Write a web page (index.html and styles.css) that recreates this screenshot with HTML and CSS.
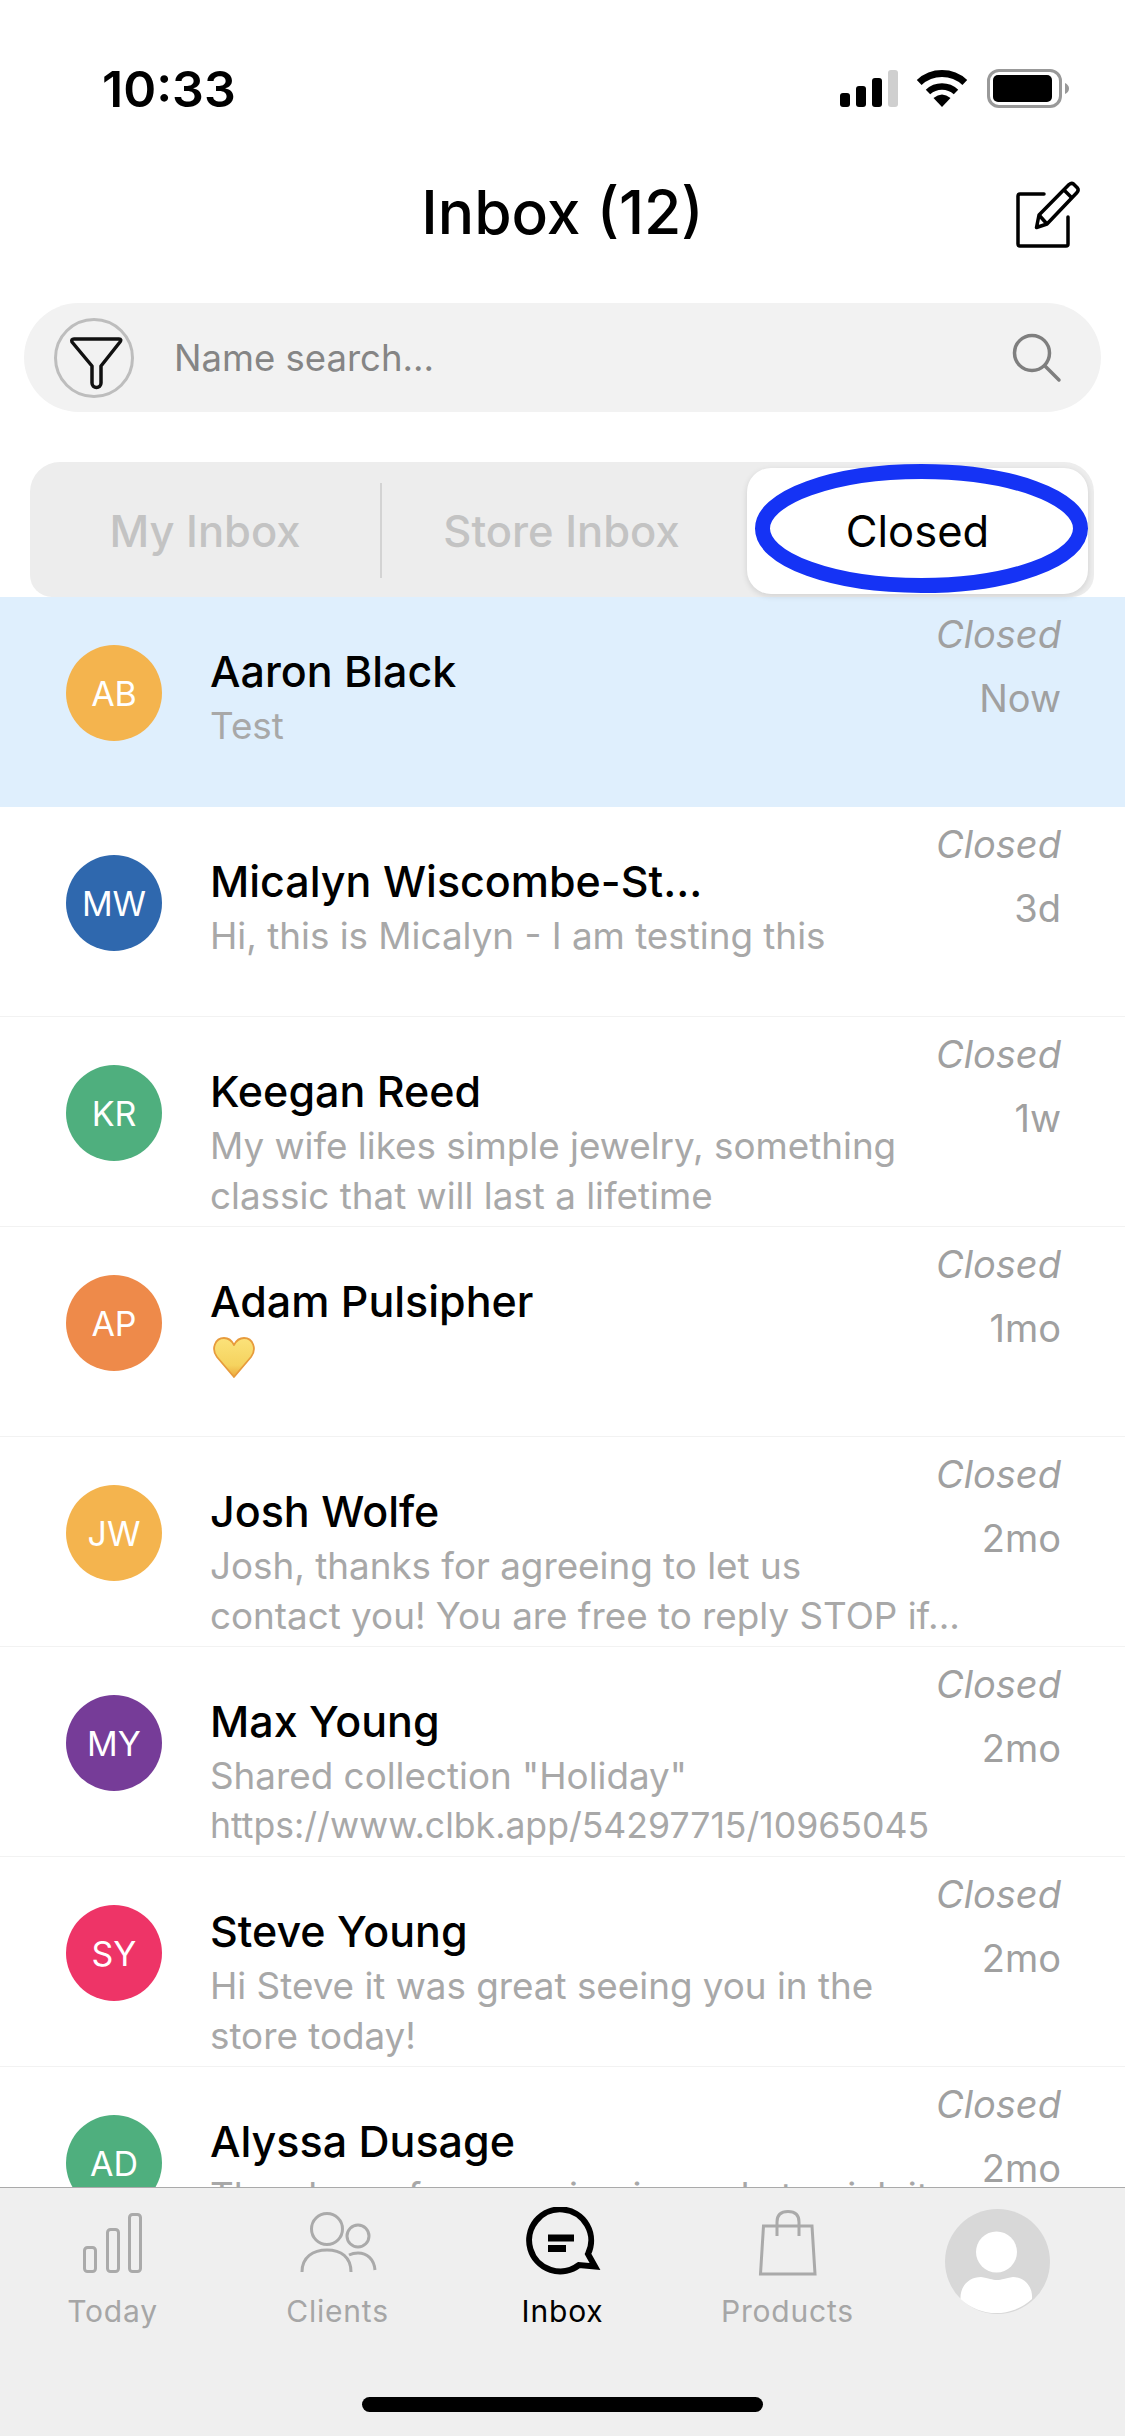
FILE: index.html
```html
<!DOCTYPE html>
<html lang="en">
<head>
<meta charset="utf-8">
<title>Inbox</title>
<link rel="stylesheet" href="styles.css">
</head>
<body>
<div class="app">
  <div class="status">
    <span class="clock">10:33</span>
    <svg class="status-icons" width="234" height="42" viewBox="0 0 234 42">
      <rect x="2" y="25" width="10" height="14" rx="3"/>
      <rect x="18" y="18" width="10" height="21" rx="3"/>
      <rect x="34" y="10" width="10" height="29" rx="3"/>
      <rect x="50" y="2" width="10" height="37" rx="3" fill="#cfcfcf"/>
      <path d="M81.2 14.5A33.5 33.5 0 0 1 126.800 14.500" fill="none" stroke="#000" stroke-width="7"/>
      <path d="M90 24A20.500 20.500 0 0 1 118 24" fill="none" stroke="#000" stroke-width="6.500"/>
      <path d="M104 39L95.500 30Q104 23 112.500 30Z"/>
      <rect x="150.500" y="2.500" width="72" height="36" rx="10.500" fill="none" stroke="#999" stroke-width="3"/>
      <rect x="155" y="7" width="59" height="27" rx="5"/>
      <path d="M227 15V26Q231 24 231 20.500Q231 17 227 15Z" fill="#999"/>
    </svg>
  </div>
  <header class="header">
    <h1 class="title">Inbox (12)</h1>
    <svg class="compose" width="70" height="72" viewBox="0 0 70 72" fill="none" stroke="#000" stroke-width="3.500" stroke-linejoin="round">
      <path d="M32 16H8Q6 16 6 18V66Q6 68 8 68H54Q56 68 56 66V39" stroke-linecap="round"/>
      <path d="M24.500 49.500L27 37L57 6.500Q59.500 4.500 61.500 6L65.500 10Q67 12 65 14.500L35 46Z"/>
      <path d="M27 37L35 46M52 12L60 20"/>
    </svg>
  </header>
  <div class="search">
    <span class="filter">
      <svg width="74" height="74" viewBox="0 0 74 74" fill="none" stroke="#111" stroke-width="3.500" stroke-linejoin="round">
        <path d="M17 18H62Q65 18 63 21L44 45V62A4 4 0 0 1 35 62V45L15 21Q14 18 17 18Z"/>
      </svg>
    </span>
    <span class="placeholder">Name search...</span>
    <svg class="search-icon" width="52" height="52" viewBox="0 0 52 52" fill="none" stroke="#7f7f7f" stroke-width="3.500" stroke-linecap="round">
      <circle cx="21" cy="21" r="17.500"/>
      <path d="M34 34L48 48"/>
    </svg>
  </div>
  <div class="segments">
    <div class="seg seg-first">My Inbox</div>
    <div class="seg seg-second">Store Inbox</div>
    <div class="seg seg-active">Closed
      <svg class="ring" width="337" height="133" viewBox="0 0 337 133" fill="none" stroke="#1533f5" stroke-width="15">
        <ellipse cx="168.500" cy="66.500" rx="159" ry="57"/>
      </svg>
    </div>
  </div>
  <main class="list">
    <article class="row row-new">
      <div class="avatar c-yellow">AB</div>
      <div class="body"><div class="name">Aaron Black</div><div class="msg"><span class="line">Test</span></div></div>
      <div class="meta"><em class="state">Closed</em><span class="when">Now</span></div>
    </article>
    <article class="row">
      <div class="avatar c-blue">MW</div>
      <div class="body"><div class="name">Micalyn Wiscombe-St...</div><div class="msg"><span class="line">Hi, this is Micalyn - I am testing this</span></div></div>
      <div class="meta"><em class="state">Closed</em><span class="when">3d</span></div>
    </article>
    <article class="row">
      <div class="avatar c-green">KR</div>
      <div class="body"><div class="name">Keegan Reed</div><div class="msg"><span class="line">My wife likes simple jewelry, something</span><span class="line">classic that will last a lifetime</span></div></div>
      <div class="meta"><em class="state">Closed</em><span class="when">1w</span></div>
    </article>
    <article class="row">
      <div class="avatar c-orange">AP</div>
      <div class="body"><div class="name">Adam Pulsipher</div><div class="msg"><span class="line">
        <svg class="heart" width="44" height="44" viewBox="0 0 44 44">
          <defs><linearGradient id="hg" x1="0" y1="0" x2="0" y2="1"><stop offset="0" stop-color="#fbe27a"/><stop offset="0.7" stop-color="#f5d35f"/><stop offset="1" stop-color="#eda83b"/></linearGradient></defs>
          <path d="M22 42L5 22C-1 14 3 3 12 3C17 3 20 6 22 10C24 6 27 3 32 3C41 3 45 14 39 22Z" fill="url(#hg)" stroke="#e79b3c" stroke-width="1.800" stroke-linejoin="round"/>
        </svg></span></div></div>
      <div class="meta"><em class="state">Closed</em><span class="when">1mo</span></div>
    </article>
    <article class="row">
      <div class="avatar c-yellow">JW</div>
      <div class="body"><div class="name">Josh Wolfe</div><div class="msg"><span class="line">Josh, thanks for agreeing to let us</span><span class="line">contact you! You are free to reply STOP if...</span></div></div>
      <div class="meta"><em class="state">Closed</em><span class="when">2mo</span></div>
    </article>
    <article class="row">
      <div class="avatar c-purple">MY</div>
      <div class="body"><div class="name">Max Young</div><div class="msg"><span class="line">Shared collection "Holiday"</span><span class="line url">https://www.clbk.app/54297715/10965045</span></div></div>
      <div class="meta"><em class="state">Closed</em><span class="when">2mo</span></div>
    </article>
    <article class="row">
      <div class="avatar c-pink">SY</div>
      <div class="body"><div class="name">Steve Young</div><div class="msg"><span class="line">Hi Steve it was great seeing you in the</span><span class="line">store today!</span></div></div>
      <div class="meta"><em class="state">Closed</em><span class="when">2mo</span></div>
    </article>
    <article class="row">
      <div class="avatar c-green">AD</div>
      <div class="body"><div class="name">Alyssa Dusage</div><div class="msg"><span class="line">The charm for your ring is ready to pick it</span></div></div>
      <div class="meta"><em class="state">Closed</em><span class="when">2mo</span></div>
    </article>
  </main>
  <nav class="tabbar">
    <div class="tab">
      <svg class="tab-icon" width="80" height="70" viewBox="0 0 80 70" fill="none" stroke="#aaa" stroke-width="3">
        <rect x="11.500" y="40.500" width="11" height="24" rx="3"/>
        <rect x="34.500" y="22.500" width="11" height="42" rx="3"/>
        <rect x="56.500" y="7.500" width="11" height="57" rx="3"/>
      </svg>
      <span>Today</span>
    </div>
    <div class="tab">
      <svg class="tab-icon" width="80" height="70" viewBox="0 0 80 70" fill="none" stroke="#aaa" stroke-width="3">
        <circle cx="29" cy="22" r="15.500"/>
        <circle cx="60" cy="29" r="11"/>
        <path d="M4 65C4 50 15 43 29 43C43 43 53 50 53 65"/>
        <path d="M51 48C54 46.500 57 46 60 46C69 46 76 52 77 63"/>
      </svg>
      <span>Clients</span>
    </div>
    <div class="tab tab-active">
      <svg class="tab-icon" width="80" height="70" viewBox="0 0 80 70" fill="none" stroke="#000" stroke-width="6">
        <path d="M65 47L72 59.500L56 58A31 31 0 1 1 65 47Z"/>
        <path d="M25 31H51M25 41.500H43" stroke-width="7"/>
      </svg>
      <span>Inbox</span>
    </div>
    <div class="tab">
      <svg class="tab-icon" width="80" height="70" viewBox="0 0 80 70" fill="none" stroke="#aaa" stroke-width="3">
        <path d="M15.500 19H64L67 67H12.500Z"/>
        <path d="M29 29V15C29 8 33 4.500 40 4.500C47 4.500 51 8 51 15V29"/>
      </svg>
      <span>Products</span>
    </div>
    <div class="tab tab-me">
      <svg width="105" height="105" viewBox="0 0 105 105">
        <circle cx="52.500" cy="52.500" r="52.500" fill="#d8d8d8"/>
        <circle cx="51.500" cy="43" r="20.500" fill="#fff"/>
        <path d="M15.500 90C15 76 25 68 36 68C44 69 47 71 52 71C57 71 60 69 68 68C79 68 88 77 87 90A52.500 52.500 0 0 1 15.500 90Z" fill="#fff"/>
      </svg>
    </div>
    <div class="home-bar"></div>
  </nav>
</div>
</body>
</html>
```
FILE: styles.css
```css
* { box-sizing: border-box; }
html, body { margin: 0; padding: 0; }
body { width: 1125px; height: 2436px; overflow: hidden; background: #fff; font-family: Inter, "Liberation Sans", sans-serif; color: #000; }
.app { width: 1125px; height: 2436px; display: flex; flex-direction: column; }

.status { height: 132px; flex: none; display: flex; justify-content: space-between; align-items: flex-start; padding: 62px 53px 0 102px; }
.clock { font-size: 50px; line-height: 54px; font-weight: 600; }
.status-icons { margin-top: 6px; display: block; }

.header { height: 171px; flex: none; position: relative; display: flex; justify-content: center; padding-top: 42px; }
.title { margin: 0; font-size: 60.5px; line-height: 76px; font-weight: 500; }
.compose { position: absolute; right: 43px; top: 46px; }

.search { height: 109px; flex: none; margin: 0 24px 1px; background: #f2f2f2; border-radius: 55px; display: flex; align-items: center; padding: 0 38px 0 30px; }
.filter { width: 80px; height: 80px; flex: none; border: 3px solid #bdbdbd; border-radius: 50%; display: flex; align-items: center; justify-content: center; }
.placeholder { flex: 1; margin-left: 40px; font-size: 36.5px; color: #858585; }
.search-icon { flex: none; }

.segments { height: 135px; flex: none; margin: 49px 31px 0 30px; padding: 6px 5px 3px 6px; background: #ededed; border-radius: 30px 30px 22px 22px; display: grid; grid-template-columns: 346px 365px 341px; align-items: stretch; }
.seg { display: flex; align-items: center; justify-content: center; font-size: 43.5px; color: #c3c3c3; font-weight: 500; }
.seg-first { padding-right: 8px; position: relative; }
.seg-first::after { content: ""; position: absolute; right: 0; top: 15px; height: 95px; width: 2px; background: #d3d3d3; }
.seg-second { padding-right: 6px; }
.seg-active { position: relative; background: #fff; border-radius: 24px; box-shadow: 0 2px 6px rgba(0,0,0,.12); color: #000; font-weight: 400; }
.ring { position: absolute; left: 6px; top: -6px; }

.list { flex: 1; min-height: 0; overflow: hidden; }
.row { height: 210px; display: flex; align-items: flex-start; padding: 0 64px 0 66px; border-bottom: 1px solid #f2f2f2; background: #fff; }
.row-new { background: #dfeffd; border-bottom-color: #dfeffd; }
.avatar { width: 96px; height: 96px; flex: none; margin-top: 48px; border-radius: 50%; display: flex; align-items: center; justify-content: center; color: #fff; font-size: 34px; }
.c-yellow { background: #f4b44e; }
.c-blue { background: #2f68ae; }
.c-green { background: #4faf7e; }
.c-orange { background: #ee8a4a; }
.c-purple { background: #763c98; }
.c-pink { background: #ee3467; }
.body { flex: 1; min-width: 0; margin-left: 48px; padding-top: 46px; }
.name { font-size: 43px; line-height: 56px; font-weight: 500; white-space: nowrap; }
.msg { font-size: 36.8px; line-height: 50px; color: #a8a8a8; margin-top: 2px; }
.line { display: block; white-space: nowrap; }
.url { font-size: 35.6px; }
.heart { display: block; margin: 6px 0 0 2px; }
.meta { flex: none; width: 130px; display: flex; flex-direction: column; align-items: flex-end; padding-top: 15px; font-size: 38px; color: #a0a0a0; }
.state { line-height: 44px; }
.when { line-height: 44px; margin-top: 20px; }

.tabbar { height: 249px; flex: none; position: relative; display: grid; grid-template-columns: repeat(5, 225px); align-items: start; padding-top: 19px; background: #efefef; border-top: 1px solid #aaa; }
.tab { display: flex; flex-direction: column; align-items: center; color: #a6a6a6; font-size: 30px; line-height: 40px; letter-spacing: 0.8px; }
.tab-icon { display: block; margin-bottom: 14px; }
.tab-active { color: #000; }
.tab-me { padding: 2px 30px 0 0; }
.home-bar { position: absolute; left: 362px; bottom: 24px; width: 401px; height: 15px; border-radius: 8px; background: #000; }
```
